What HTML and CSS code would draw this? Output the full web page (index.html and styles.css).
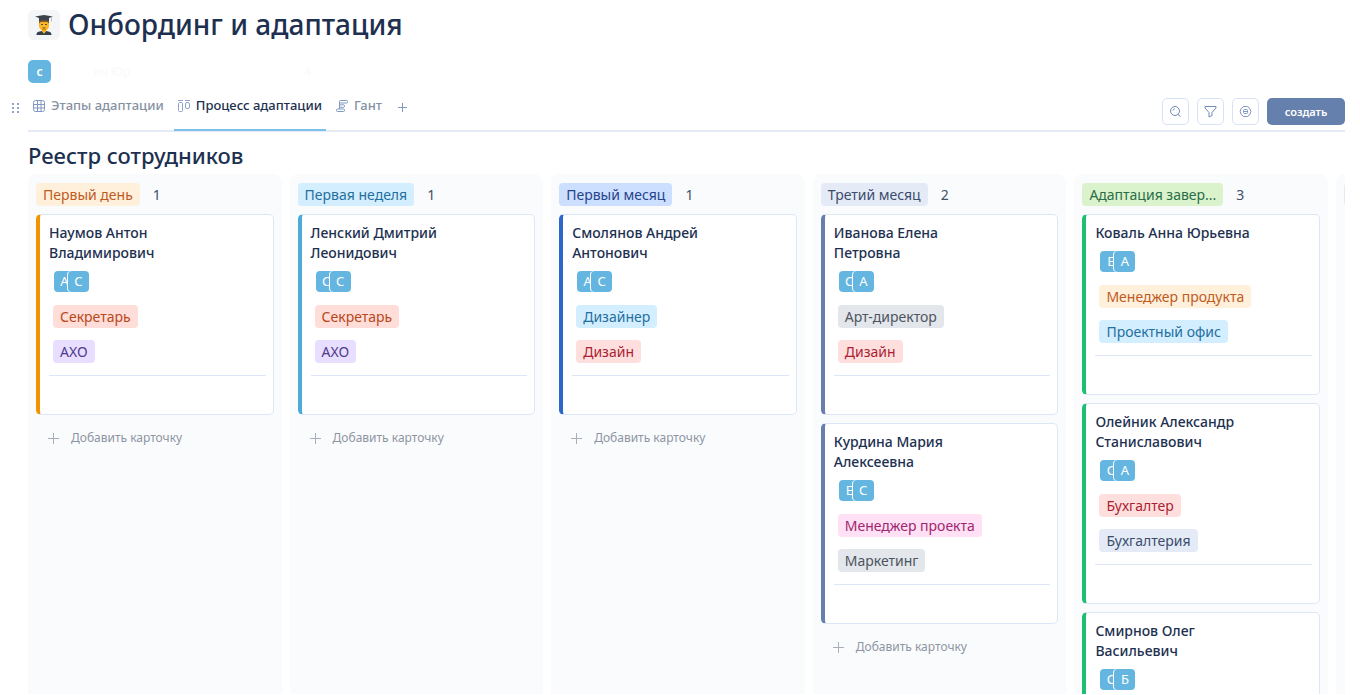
FILE: index.html
```html
<!DOCTYPE html>
<html lang="ru">
<head>
<meta charset="utf-8">
<title>Онбординг и адаптация</title>
<link rel="stylesheet" href="styles.css">
</head>
<body>
<div class="page">
  <header class="head">
    <span class="head-icon">
      <svg width="18" height="20" viewBox="0 0 18 20" aria-hidden="true">
        <path d="M4 5h10v6c0 2-2 5-5 5s-5-3-5-5z" fill="#fbb829"/>
        <path d="M4 5h10v3.500l-2-1.500H6L4 8.500z" fill="#8a5a2b"/>
        <path d="M7 14h4v4H7z" fill="#e59600"/>
        <path d="M1.500 20c0-3 2-3.500 5.500-4l2 2 2-2c3.500.5 5.500 1 5.500 4z" fill="#33404a"/>
        <path d="M6.500 15.500l2.500 3.500 2.500-3.500z" fill="#fbb829"/>
        <path d="M0 1.500L9 0l9 1.500L14 3v3c-3-1-7-1-10 0V3z" fill="#3b4249"/>
        <path d="M16.500 1.500v5" stroke="#b9bcc2" fill="none"/>
        <path d="M6 9.500h2M10 9.500h2M7.500 13h3" stroke="#6d4c2a" fill="none"/>
      </svg>
    </span>
    <h1 class="title">Онбординг и адаптация</h1>
  </header>

  <div class="owner">
    <span class="owner-avatar">с</span>
    <span class="owner-name"><span>ин Юр</span><span>4</span></span>
  </div>

  <div class="toolbar">
    <button class="drag" type="button" aria-label="Переместить">
      <svg width="8" height="10" viewBox="0 0 8 10" fill="#8fa4ca"><path d="M0 0h2v2H0zM5 0h2v2H5zM0 4h2v2H0zM5 4h2v2H5zM0 8h2v2H0zM5 8h2v2H5z"/></svg>
    </button>
    <nav class="tabs">
      <a class="tab" href="#stages">
        <svg width="12" height="12" viewBox="0 0 12 12" fill="none" stroke="#7f97c2"><rect x=".5" y=".5" width="11" height="11" rx="2"/><path d="M4.500 .5v11M8 .5v11M.5 4.500h11M.5 8h11"/></svg>
        Этапы адаптации</a>
      <a class="tab tab-active" href="#process">
        <svg width="12" height="12" viewBox="0 0 12 12" fill="none" stroke="#8fa4ca"><rect x=".5" y="2.500" width="4" height="9" rx="1"/><rect x="7.500" y="2.500" width="4" height="6" rx="1.500"/><path d="M0 .5h5M7 .5h5"/></svg>
        Процесс адаптации</a>
      <a class="tab" href="#gantt">
        <svg width="12" height="12" viewBox="0 0 12 12" fill="none" stroke="#7f97c2"><rect x="3.500" y=".5" width="8" height="2.500" rx="1"/><rect x="3.500" y="4.800" width="5" height="2.500" rx="1"/><rect x=".5" y="9" width="8" height="2.500" rx="1"/><path d="M3.500 2v7"/></svg>
        Гант</a>
      <button class="tab-add" type="button" aria-label="Добавить вид">
        <svg width="9" height="9" viewBox="0 0 9 9" stroke="#7f97c2"><path d="M4.500 0v9M0 4.500h9"/></svg>
      </button>
    </nav>
    <div class="actions">
      <button class="tool" type="button" aria-label="Поиск">
        <svg width="13" height="13" viewBox="0 0 13 13" fill="none" stroke="#7089b5"><circle cx="6" cy="6" r="4.500"/><path d="M9 9.500l2.500 2M3.800 5.500a2.500 2.500 0 0 1 2-1.800"/></svg>
      </button>
      <button class="tool" type="button" aria-label="Фильтр">
        <svg width="13" height="13" viewBox="0 0 13 13" fill="none" stroke="#7089b5" stroke-linejoin="round"><path d="M1 1.500h11v1.500L8 7.500v3l-3 1.500V7.500L1 3z"/></svg>
      </button>
      <button class="tool" type="button" aria-label="Настройки">
        <svg width="13" height="13" viewBox="0 0 13 13" fill="none" stroke="#7f97c2"><path d="M4.700 1.500h3.600l2.600 2 .9 3-.9 3-2.600 2H4.700l-2.600-2-.9-3 .9-3z"/><rect x="4.500" y="4.500" width="4" height="4" rx="1"/><path d="M4.500 6.500h4"/></svg>
      </button>
      <button class="create" type="button">создать</button>
    </div>
  </div>

  <h2 class="board-title">Реестр сотрудников</h2>

  <main class="board">
    <section class="column orange">
      <div class="column-head"><h3 class="tag t-cream">Первый день</h3><span class="count">1</span></div>
      <article class="card">
        <h4 class="name">Наумов Антон Владимирович</h4>
        <div class="people"><span class="person">А</span><span class="person">С</span></div>
        <div class="tags"><span class="tag t-coral">Секретарь</span><span class="tag t-violet">АХО</span></div>
      </article>
      <button class="add" type="button"><svg width="11" height="11" viewBox="0 0 11 11"><path d="M5.500 0v11M0 5.500h11"/></svg>Добавить карточку</button>
    </section>

    <section class="column sky">
      <div class="column-head"><h3 class="tag t-sky">Первая неделя</h3><span class="count">1</span></div>
      <article class="card">
        <h4 class="name">Ленский Дмитрий Леонидович</h4>
        <div class="people"><span class="person">С</span><span class="person">С</span></div>
        <div class="tags"><span class="tag t-coral">Секретарь</span><span class="tag t-violet">АХО</span></div>
      </article>
      <button class="add" type="button"><svg width="11" height="11" viewBox="0 0 11 11"><path d="M5.500 0v11M0 5.500h11"/></svg>Добавить карточку</button>
    </section>

    <section class="column blue">
      <div class="column-head"><h3 class="tag t-blue">Первый месяц</h3><span class="count">1</span></div>
      <article class="card">
        <h4 class="name">Смолянов Андрей Антонович</h4>
        <div class="people"><span class="person">А</span><span class="person">С</span></div>
        <div class="tags"><span class="tag t-sky">Дизайнер</span><span class="tag t-red">Дизайн</span></div>
      </article>
      <button class="add" type="button"><svg width="11" height="11" viewBox="0 0 11 11"><path d="M5.500 0v11M0 5.500h11"/></svg>Добавить карточку</button>
    </section>

    <section class="column slate">
      <div class="column-head"><h3 class="tag t-slate">Третий месяц</h3><span class="count">2</span></div>
      <article class="card">
        <h4 class="name">Иванова Елена Петровна</h4>
        <div class="people"><span class="person">С</span><span class="person">А</span></div>
        <div class="tags"><span class="tag t-grey">Арт-директор</span><span class="tag t-red">Дизайн</span></div>
      </article>
      <article class="card">
        <h4 class="name">Курдина Мария Алексеевна</h4>
        <div class="people"><span class="person">Е</span><span class="person">С</span></div>
        <div class="tags"><span class="tag t-pink">Менеджер проекта</span><span class="tag t-grey">Маркетинг</span></div>
      </article>
      <button class="add" type="button"><svg width="11" height="11" viewBox="0 0 11 11"><path d="M5.500 0v11M0 5.500h11"/></svg>Добавить карточку</button>
    </section>

    <section class="column green">
      <div class="column-head"><h3 class="tag t-green">Адаптация завер...</h3><span class="count">3</span></div>
      <article class="card">
        <h4 class="name">Коваль Анна Юрьевна</h4>
        <div class="people"><span class="person">Е</span><span class="person">А</span></div>
        <div class="tags"><span class="tag t-cream">Менеджер продукта</span><span class="tag t-sky">Проектный офис</span></div>
      </article>
      <article class="card">
        <h4 class="name">Олейник Александр Станиславович</h4>
        <div class="people"><span class="person">С</span><span class="person">А</span></div>
        <div class="tags"><span class="tag t-red">Бухгалтер</span><span class="tag t-slate">Бухгалтерия</span></div>
      </article>
      <article class="card">
        <h4 class="name">Смирнов Олег Васильевич</h4>
        <div class="people"><span class="person">С</span><span class="person">Б</span></div>
      </article>
    </section>

    <section class="column slate"><div class="column-head"><span class="tag t-slate"></span></div></section>
  </main>
</div>
</body>
</html>
```
FILE: styles.css
```css
* { box-sizing: border-box; }
body { margin: 0; background: #fff; color: #1d3050; font-family: "Noto Sans", "Open Sans", sans-serif; font-size: 14px; }
h1, h2, h3, h4 { margin: 0; font-weight: 500; }
button { border: 0; padding: 0; background: none; font: inherit; cursor: pointer; }
svg { display: block; flex: none; }

.page { height: 100vh; overflow: hidden; display: flex; flex-direction: column; padding: 8px 15px 1px 28px; }

.head { display: flex; align-items: center; gap: 8px; height: 34px; }
.head-icon { display: grid; place-items: center; width: 32px; height: 30px; border-radius: 6px; background: #f4f5f7; }
.title { font-size: 28px; line-height: 32px; padding-bottom: 2px; }

.owner { display: flex; align-items: center; gap: 42px; margin-top: 18px; }
.owner-avatar { display: grid; place-items: center; width: 23px; height: 23px; border-radius: 5px; background: #64b6e0; color: #fff; font-size: 12px; font-weight: 600; }
.owner-name { display: flex; justify-content: space-between; width: 218px; font-size: 12px; color: #f8f9fb; }

.toolbar { display: flex; align-items: center; height: 48px; margin-top: 1px; border-bottom: 2px solid #e4ebf7; flex: none; }
.drag { margin-left: -16px; margin-right: 9px; padding-top: 2px; }
.tabs { display: flex; align-self: stretch; align-items: stretch; }
.tab { display: flex; align-items: flex-start; gap: 6px; padding: 11px 4px 0; margin-bottom: -1px; border-bottom: 2px solid transparent; color: #8791a3; font-size: 13px; line-height: 20px; font-weight: 500; text-decoration: none; }
.tab svg { margin-top: 5px; }
.tab + .tab { margin-left: 6px; }
.tab-active { color: #1d3050; border-bottom-color: #7ec1e6; }
.tab-add { display: flex; align-items: flex-start; padding: 19px 4px 0; margin-left: 8px; }

.actions { display: flex; gap: 8px; margin-left: auto; padding-top: 8px; }
.tool { display: grid; place-items: center; width: 27px; height: 27px; border: 1px solid #d6e2f6; border-radius: 5px; background: #fff; }
.create { width: 78px; height: 27px; border-radius: 5px; background: #6680ad; color: #fff; font-size: 11px; font-weight: 600; }

.board-title { margin-top: 9px; font-size: 22px; line-height: 28px; }

.board { flex: 1; min-height: 0; margin-top: 5px; display: grid; grid-auto-flow: column; grid-auto-columns: calc((100% - 49px) / 5); gap: 8px; overflow: hidden; }
.column { display: flex; flex-direction: column; gap: 8px; padding: 9px 8px 0; border-radius: 8px 8px 0 0; background: #fafbfd; min-width: 0; overflow: hidden; }
.column-head { display: flex; align-items: center; gap: 13px; flex: none; }
.count { color: #42506a; line-height: 20px; }

.tag { padding: 0 7px; min-height: 23px; border-radius: 4px; font-size: 14px; line-height: 23px; font-weight: 400; }
.t-cream { background: #fff0dc; color: #bf5b1c; }
.t-coral { background: #ffddd8; color: #b8481c; }
.t-violet { background: #e8deff; color: #4f3a8c; }
.t-sky { background: #d3eefe; color: #256f9e; }
.t-blue { background: #ccdffe; color: #26438c; }
.t-slate { background: #e4ebf7; color: #3c4c6c; }
.t-green { background: #daf3cc; color: #2a6d46; }
.t-red { background: #ffdfde; color: #ab1f33; }
.t-grey { background: #e3e6eb; color: #4d5560; }
.t-pink { background: #ffe0f4; color: #9f2670; }

.orange { --accent: #f29400; }
.sky { --accent: #4dabd8; }
.blue { --accent: #2c68c9; }
.slate { --accent: #6680ad; }
.green { --accent: #1fbf72; }

.card { flex: none; display: flex; flex-direction: column; padding: 8px 7px 38px 9px; border: 1px solid #dce6f6; border-left: 4px solid var(--accent); border-radius: 5px; background: #fff; }
.name { max-width: 170px; font-size: 14px; line-height: 20px; }
.people { display: flex; margin: 8px 5px 0; }
.person { display: grid; place-items: center; width: 21px; height: 21px; border-radius: 4px; background: #64b6e0; color: #fff; font-size: 13px; line-height: 21px; }
.person + .person { margin-left: -7px; box-shadow: -1px 0 0 #fff; }
.tags { display: flex; flex-direction: column; align-items: flex-start; gap: 12px; padding: 13px 4px 12px; border-bottom: 1px solid #dce6f6; }

.add { display: flex; align-items: center; gap: 12px; flex: none; padding: 7px 12px; color: #8d95a3; font-size: 12px; line-height: 16px; }
.add svg { stroke: #a9afba; }
```
